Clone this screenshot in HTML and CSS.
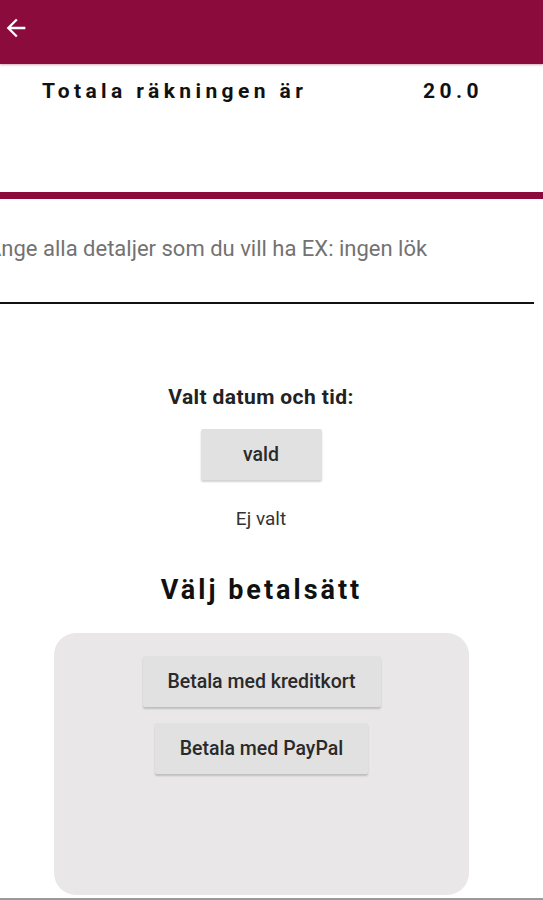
FILE: index.html
```html
<!DOCTYPE html>
<html lang="sv">
<head>
<meta charset="utf-8">
<title>Betalning</title>
<link rel="stylesheet" href="styles.css">
</head>
<body>
<div class="screen">
  <header class="appbar">
    <svg class="back" viewBox="0 0 24 24" width="24" height="24" aria-hidden="true">
      <path d="M20 11H7.83l5.59-5.59L12 4l-8 8 8 8 1.41-1.41L7.83 13H20v-2z" fill="#fff"/>
    </svg>
  </header>
  <div class="total">
    <span class="total-label">Totala räkningen är</span>
    <span class="total-value">20.0</span>
  </div>
  <div class="divider"></div>
  <div class="field">
    <span class="placeholder">Ange alla detaljer som du vill ha EX: ingen lök</span>
  </div>
  <div class="datetime">
    <div class="dt-title">Valt datum och tid:</div>
    <button class="btn btn-vald">vald</button>
    <div class="dt-value">Ej valt</div>
  </div>
  <h2 class="pay-title">Välj betalsätt</h2>
  <div class="card">
    <button class="btn btn-card">Betala med kreditkort</button>
    <button class="btn btn-paypal">Betala med PayPal</button>
  </div>
</div>
</body>
</html>
```
FILE: styles.css
```css
html, body {
  margin: 0;
  padding: 0;
  background: #fff;
}
body {
  font-family: Roboto, "Liberation Sans", sans-serif;
  width: 543px;
  height: 900px;
  overflow: hidden;
}
.screen {
  width: 543px;
  height: 900px;
  display: flex;
  flex-direction: column;
  border-bottom: 2px solid #9a9a9a;
  box-sizing: border-box;
  overflow: hidden;
}
.appbar {
  height: 64px;
  flex: none;
  background: #8c0b3d;
  display: flex;
  align-items: center;
  box-shadow: 0 1px 2px rgba(140, 11, 61, 0.35);
}
.back {
  width: 28px;
  height: 28px;
  margin-left: 2px;
  margin-top: -8px;
}
.total {
  display: flex;
  align-items: baseline;
  padding-left: 42px;
  margin-top: 15px;
  height: 40px;
  font-weight: 700;
  font-size: 21px;
  letter-spacing: 4.4px;
  color: #111;
}
.total-label {
  width: 381px;
}
.divider {
  margin-top: 73px;
  height: 7px;
  background: #8c0b3d;
  flex: none;
}
.field {
  height: 105px;
  box-sizing: border-box;
  border-bottom: 2px solid #111;
  width: 534px;
  padding-top: 37px;
  overflow: hidden;
  white-space: nowrap;
}
.placeholder {
  display: block;
  margin-left: -13px;
  font-size: 22px;
  color: #727272;
}
.datetime {
  display: flex;
  flex-direction: column;
  align-items: center;
  margin-top: 80px;
  margin-left: -21px;
}
.dt-title {
  font-weight: 700;
  font-size: 21px;
  letter-spacing: 0.4px;
  color: #222;
  line-height: 26px;
}
.btn {
  font-family: Roboto, "Liberation Sans", sans-serif;
  font-weight: 500;
  font-size: 19.5px;
  color: #2a2a2a;
  background: #e1e1e1;
  border: none;
  border-radius: 2px;
  box-shadow: 0 2px 2px rgba(0, 0, 0, 0.18);
  height: 51px;
  padding: 0;
}
.btn-vald {
  width: 121px;
  margin-top: 19px;
}
.dt-value {
  margin-top: 28px;
  font-size: 19px;
  color: #333;
  line-height: 22px;
}
.pay-title {
  margin: 44px 0 0 -20px;
  text-align: center;
  font-size: 27px;
  font-weight: 700;
  letter-spacing: 3px;
  color: #111;
  line-height: 32px;
}
.card {
  margin: 27px 0 3px 54px;
  width: 415px;
  flex: 1;
  background: #e9e7e8;
  border-radius: 22px;
  display: flex;
  flex-direction: column;
  align-items: center;
  padding-top: 23px;
  gap: 16px;
}
.btn-card {
  width: 238px;
}
.btn-paypal {
  width: 213px;
}
```
